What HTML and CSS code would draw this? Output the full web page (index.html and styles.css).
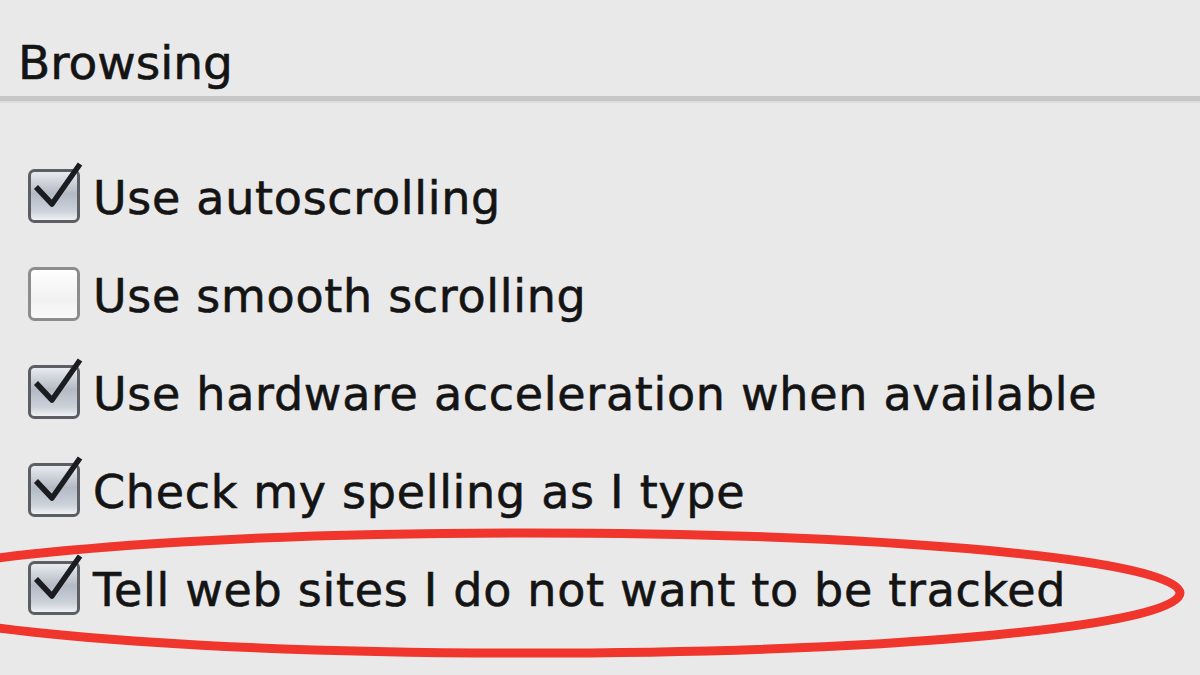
FILE: index.html
```html
<!DOCTYPE html>
<html>
<head>
    <meta name="viewport" content="width=device-width, initial-scale=1">
    <link rel="stylesheet" href="styles.css">
</head>
<body>
    <div class="pane">
        <h1 class="group-title">Browsing</h1>
        <div class="divider"></div>

        <!-- Browsing options -->
        <div class="options">
            <label class="option">
                <svg class="box" viewBox="0 -8 56 64">
                    <defs>
                        <linearGradient id="fillOn" x1="0" y1="0" x2="0" y2="1">
                            <stop offset="0" stop-color="#eceef2"/>
                            <stop offset="0.45" stop-color="#b4bac4"/>
                            <stop offset="0.8" stop-color="#ccd2da"/>
                            <stop offset="1" stop-color="#f5f6f8"/>
                        </linearGradient>
                    </defs>
                    <rect x="1.5" y="1.5" width="49" height="51" rx="5" fill="url(#fillOn)" stroke="#5c5e63" stroke-width="3"/>
                    <path d="M8 18 L24 35 L52 -5" fill="none" stroke="#1b1c20" stroke-width="5.5" stroke-linejoin="round"/>
                </svg>
                <span>Use autoscrolling</span>
            </label>
            <label class="option">
                <svg class="box" viewBox="0 -8 56 64">
                    <defs>
                        <linearGradient id="fillOff" x1="0" y1="0" x2="0" y2="1">
                            <stop offset="0" stop-color="#ffffff"/>
                            <stop offset="0.6" stop-color="#f1f1f1"/>
                            <stop offset="1" stop-color="#fafafa"/>
                        </linearGradient>
                    </defs>
                    <rect x="1.5" y="1.5" width="49" height="51" rx="5" fill="url(#fillOff)" stroke="#8c8c8c" stroke-width="3"/>
                </svg>
                <span>Use smooth scrolling</span>
            </label>
            <label class="option">
                <svg class="box" viewBox="0 -8 56 64">
                    <rect x="1.5" y="1.5" width="49" height="51" rx="5" fill="url(#fillOn)" stroke="#5c5e63" stroke-width="3"/>
                    <path d="M8 18 L24 35 L52 -5" fill="none" stroke="#1b1c20" stroke-width="5.5" stroke-linejoin="round"/>
                </svg>
                <span>Use hardware acceleration when available</span>
            </label>
            <label class="option">
                <svg class="box" viewBox="0 -8 56 64">
                    <rect x="1.5" y="1.5" width="49" height="51" rx="5" fill="url(#fillOn)" stroke="#5c5e63" stroke-width="3"/>
                    <path d="M8 18 L24 35 L52 -5" fill="none" stroke="#1b1c20" stroke-width="5.5" stroke-linejoin="round"/>
                </svg>
                <span>Check my spelling as I type</span>
            </label>
            <label class="option">
                <svg class="box" viewBox="0 -8 56 64">
                    <rect x="1.5" y="1.5" width="49" height="51" rx="5" fill="url(#fillOn)" stroke="#5c5e63" stroke-width="3"/>
                    <path d="M8 18 L24 35 L52 -5" fill="none" stroke="#1b1c20" stroke-width="5.5" stroke-linejoin="round"/>
                </svg>
                <span>Tell web sites I do not want to be tracked</span>
            </label>
        </div>
    </div>

    <!-- red marker round the last option -->
    <svg class="marker" viewBox="0 0 1200 675">
        <ellipse cx="528" cy="593" rx="652" ry="60" fill="none" stroke="#f0352c" stroke-width="9"/>
    </svg>
</body>
</html>
```
FILE: styles.css
```css
body {
    margin: 0;
    background-color: #e9e9e9;
    font-family: "DejaVu Sans", Verdana, sans-serif;
    color: #141414;
    overflow: hidden;
}

.pane {
    width: 1200px;
    height: 675px;
}

/* Group heading */
.group-title {
    margin: 0;
    padding: 34px 0 0 18px;
    height: 62px;
    font-size: 47px;
    font-weight: normal;
    line-height: 58px;
    -webkit-text-stroke: 0.6px #141414;
}

.divider {
    height: 5px;
    background-color: #c6c6c6;
    border-bottom: 2px solid #dcdcdc;
}

/* Checkbox list */
.options {
    display: flex;
    flex-direction: column;
    padding-top: 46px;
    padding-left: 28px;
}

.option {
    display: flex;
    align-items: center;
    gap: 9px;
    height: 98px;
    font-size: 46px;
    letter-spacing: 0.7px;
    -webkit-text-stroke: 0.6px #141414;
}

.box {
    width: 56px;
    height: 64px;
    flex-shrink: 0;
    margin-top: -11px;
}

.marker {
    position: absolute;
    left: 0;
    top: 0;
    width: 1200px;
    height: 675px;
    pointer-events: none;
}
```
